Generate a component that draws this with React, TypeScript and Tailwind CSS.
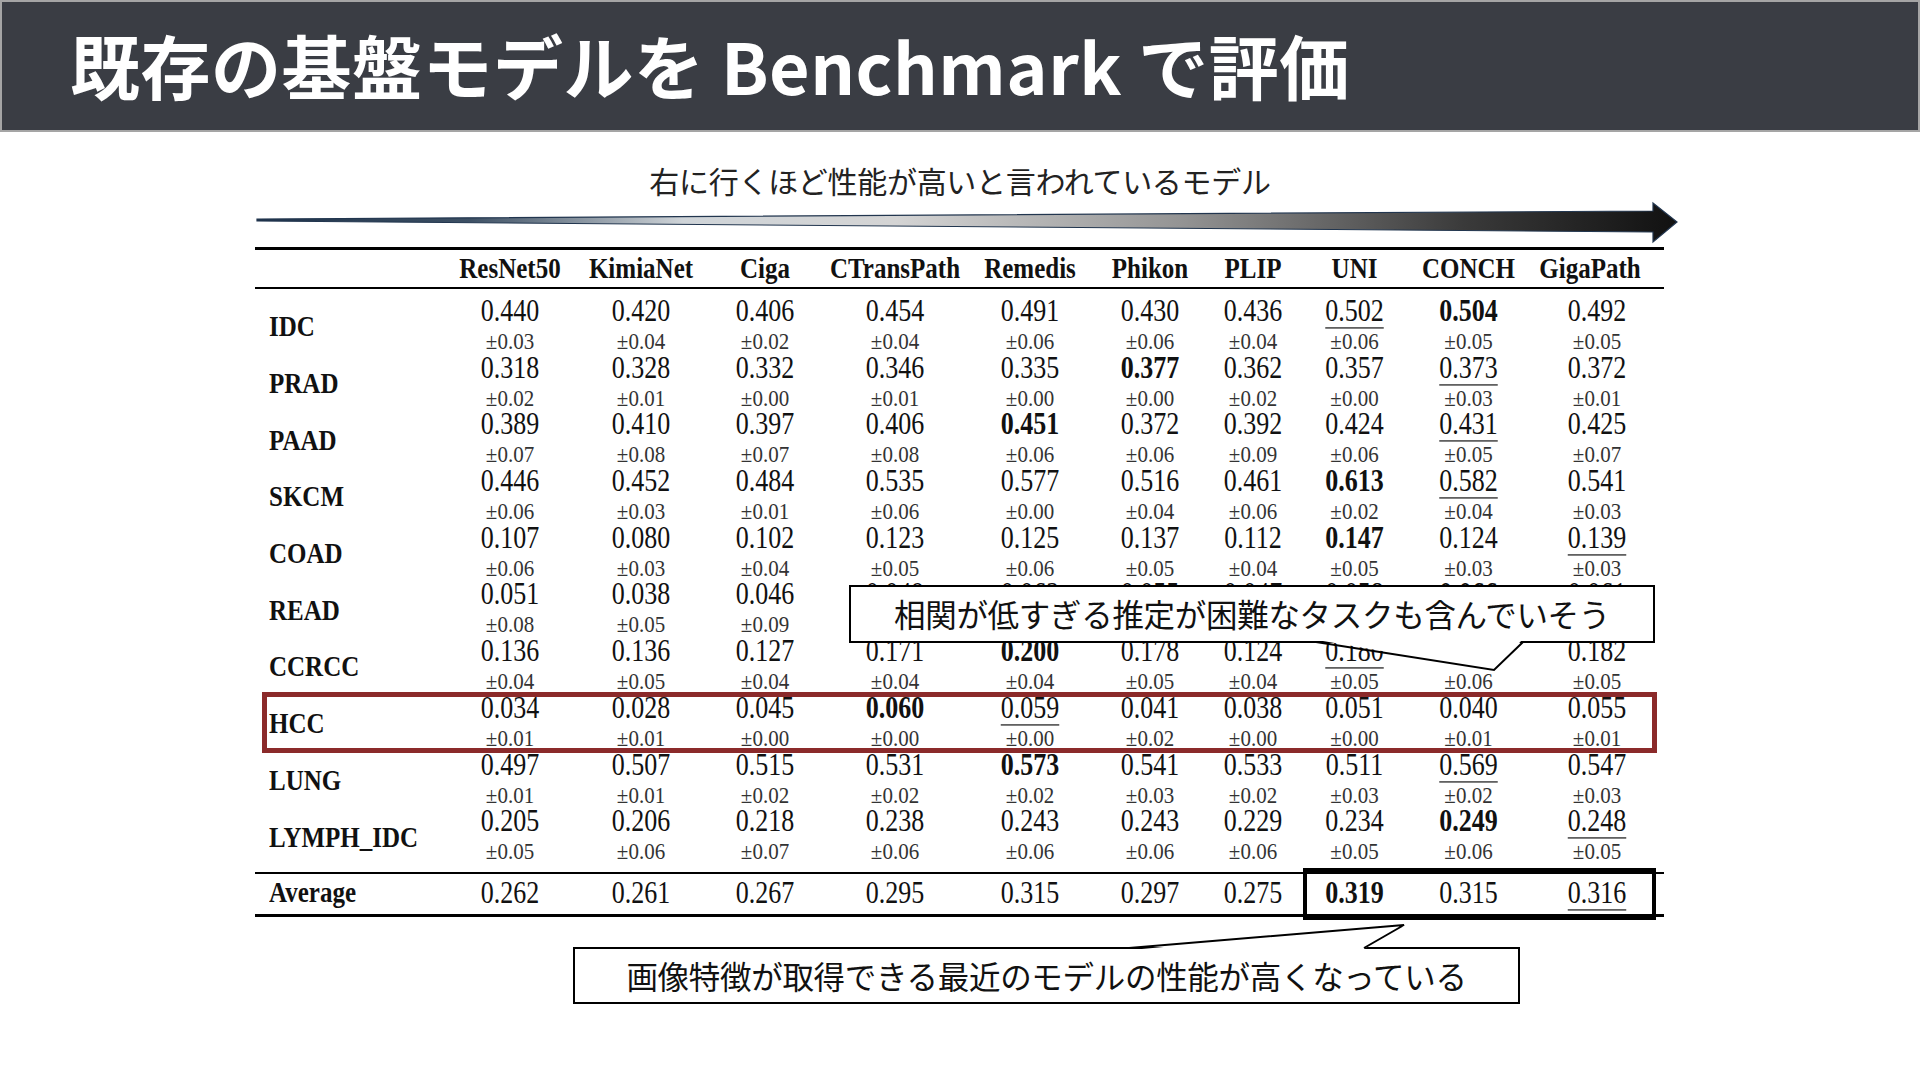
const COLS = ["ResNet50", "KimiaNet", "Ciga", "CTransPath", "Remedis", "Phikon", "PLIP", "UNI", "CONCH", "GigaPath"];

type Row = { name: string; v: string; pm: string; b: number; u: number };

// b = bold column index, u = underlined column index
const ROWS: Row[] = [
  { name: "IDC", v: "0.440 0.420 0.406 0.454 0.491 0.430 0.436 0.502 0.504 0.492", pm: "0.03 0.04 0.02 0.04 0.06 0.06 0.04 0.06 0.05 0.05", b: 8, u: 7 },
  { name: "PRAD", v: "0.318 0.328 0.332 0.346 0.335 0.377 0.362 0.357 0.373 0.372", pm: "0.02 0.01 0.00 0.01 0.00 0.00 0.02 0.00 0.03 0.01", b: 5, u: 8 },
  { name: "PAAD", v: "0.389 0.410 0.397 0.406 0.451 0.372 0.392 0.424 0.431 0.425", pm: "0.07 0.08 0.07 0.08 0.06 0.06 0.09 0.06 0.05 0.07", b: 4, u: 8 },
  { name: "SKCM", v: "0.446 0.452 0.484 0.535 0.577 0.516 0.461 0.613 0.582 0.541", pm: "0.06 0.03 0.01 0.06 0.00 0.04 0.06 0.02 0.04 0.03", b: 7, u: 8 },
  { name: "COAD", v: "0.107 0.080 0.102 0.123 0.125 0.137 0.112 0.147 0.124 0.139", pm: "0.06 0.03 0.04 0.05 0.06 0.05 0.04 0.05 0.03 0.03", b: 7, u: 9 },
  { name: "READ", v: "0.051 0.038 0.046 0.049 0.062 0.055 0.047 0.058 0.066 0.061", pm: "0.08 0.05 0.09 0.06 0.07 0.05 0.06 0.07 0.05 0.06", b: 8, u: 4 },
  { name: "CCRCC", v: "0.136 0.136 0.127 0.171 0.200 0.178 0.124 0.180 0.165 0.182", pm: "0.04 0.05 0.04 0.04 0.04 0.05 0.04 0.05 0.06 0.05", b: 4, u: 7 },
  { name: "HCC", v: "0.034 0.028 0.045 0.060 0.059 0.041 0.038 0.051 0.040 0.055", pm: "0.01 0.01 0.00 0.00 0.00 0.02 0.00 0.00 0.01 0.01", b: 3, u: 4 },
  { name: "LUNG", v: "0.497 0.507 0.515 0.531 0.573 0.541 0.533 0.511 0.569 0.547", pm: "0.01 0.01 0.02 0.02 0.02 0.03 0.02 0.03 0.02 0.03", b: 4, u: 8 },
  { name: "LYMPH_IDC", v: "0.205 0.206 0.218 0.238 0.243 0.243 0.229 0.234 0.249 0.248", pm: "0.05 0.06 0.07 0.06 0.06 0.06 0.06 0.05 0.06 0.05", b: 8, u: 9 },
];

const AVG = "0.262 0.261 0.267 0.295 0.315 0.297 0.275 0.319 0.315 0.316".split(" ");

const GRID = "grid grid-cols-[187px_136px_126px_122px_138px_132px_108px_98px_105px_123px_134px]";

function Num({ text, bold, under }: { text: string; bold?: boolean; under?: boolean }) {
  return (
    <span
      className={
        "inline-block scale-y-[1.18] text-[26px] leading-[24px] " +
        (bold ? "font-bold " : "") +
        (under ? "underline decoration-1 underline-offset-[5px]" : "")
      }
    >
      {text}
    </span>
  );
}

function Arrow() {
  return (
    <svg width="1425" height="45" viewBox="0 0 1425 45" className="ml-[255px] block">
      <defs>
        <linearGradient id="shaft" x1="0" y1="0" x2="1" y2="0">
          <stop offset="0" stopColor="#1d3149" />
          <stop offset="0.15" stopColor="#3d5064" />
          <stop offset="0.3" stopColor="#cfd4d8" />
          <stop offset="0.45" stopColor="#d4d4d4" />
          <stop offset="0.65" stopColor="#949494" />
          <stop offset="0.85" stopColor="#3a3a3a" />
          <stop offset="1" stopColor="#111111" />
        </linearGradient>
      </defs>
      <polygon
        points="2,19 1398,11 1398,3 1422,22 1398,42 1398,32 2,21"
        fill="url(#shaft)"
        stroke="#22364f"
        strokeWidth="1.2"
        strokeLinejoin="miter"
      />
    </svg>
  );
}

export default function App() {
  return (
    <div className="relative w-[1920px] h-[1080px] overflow-hidden bg-white">
      {/* title bar */}
      <div className="h-[132px] bg-[#3a3d44] border-2 border-[#a5a5a5] flex items-center pl-[68px]">
        <h1 className="text-white font-bold text-[70px] leading-none tracking-[0.5px] font-['Noto_Sans_CJK_JP',sans-serif] -mt-[2px]">
          既存の基盤モデルを Benchmark で評価
        </h1>
      </div>

      {/* subtitle + arrow */}
      <div className="mt-[28px] h-[40px] flex items-center justify-center text-[30px] tracking-[-0.3px] text-[#222] font-['Noto_Sans_CJK_JP',sans-serif]">
        右に行くほど性能が高いと言われているモデル
      </div>
      <Arrow />

      {/* table */}
      <div className="ml-[255px] mt-[2px] w-[1409px] border-t-[3px] border-b-[3px] border-black text-[#111] font-['Liberation_Serif',serif]">
        <div className={GRID + " h-[39px] border-b-2 border-black items-center"}>
          <div />
          {COLS.map((c, i) => (
            <div key={c} className={"flex justify-center " + (i === 9 ? "pr-[14px]" : "")}>
              <span className="inline-block scale-y-[1.15] text-[25px] font-bold leading-none">{c}</span>
            </div>
          ))}
        </div>

        <div className="pt-[11px] pb-[5px]">
          {ROWS.map((r) => {
            const vs = r.v.split(" ");
            const pms = r.pm.split(" ");
            return (
              <div key={r.name} className={GRID + " h-[56.7px]"}>
                <div className="flex items-center pl-[14px] pb-[3px]">
                  <span className="inline-block scale-y-[1.15] text-[25px] font-bold leading-none">{r.name}</span>
                </div>
                {vs.map((v, i) => (
                  <div key={i} className="flex flex-col items-center">
                    <Num text={v} bold={i === r.b} under={i === r.u} />
                    <span className="mt-[6px] inline-block scale-y-[1.05] text-[21px] leading-[24px] text-[#333]">
                      ±{pms[i]}
                    </span>
                  </div>
                ))}
              </div>
            );
          })}
        </div>

        <div className={GRID + " h-[42px] border-t-2 border-black items-center"}>
          <div className="pl-[14px]">
            <span className="inline-block scale-y-[1.15] text-[25px] font-bold leading-none">Average</span>
          </div>
          {AVG.map((v, i) => (
            <div key={i} className="flex justify-center">
              <Num text={v} bold={i === 7} under={i === 9} />
            </div>
          ))}
        </div>
      </div>

      {/* highlight boxes */}
      <div className="absolute left-[262px] top-[692px] w-[1395px] h-[61px] border-[5px] border-[#8b2a2a]" />
      <div className="absolute left-[1303px] top-[868px] w-[353px] h-[52px] border-[4px] border-black" />

      {/* callouts */}
      <div className="absolute left-[849px] top-[585px] w-[806px] h-[58px] border-2 border-black bg-white flex items-center justify-center text-[31.5px] tracking-[-0.3px] text-[#111] font-['Noto_Sans_CJK_JP',sans-serif]">
        相関が低すぎる推定が困難なタスクも含んでいそう
      </div>
      <div className="absolute left-[573px] top-[947px] w-[947px] h-[57px] border-2 border-black bg-white flex items-center justify-center text-[31.5px] tracking-[-0.3px] text-[#111] font-['Noto_Sans_CJK_JP',sans-serif]">
        画像特徴が取得できる最近のモデルの性能が高くなっている
      </div>

      <svg className="absolute left-0 top-0 pointer-events-none" width="1920" height="1080">
        <polygon points="1317,640 1494,670 1522,640" fill="#fff" />
        <polyline points="1316,642 1494,670 1523,642" fill="none" stroke="#000" strokeWidth="2" />
        <polygon points="1131,950 1404,925 1362,950" fill="#fff" />
        <polyline points="1129,948 1404,925 1364,948" fill="none" stroke="#000" strokeWidth="2" />
      </svg>
    </div>
  );
}
